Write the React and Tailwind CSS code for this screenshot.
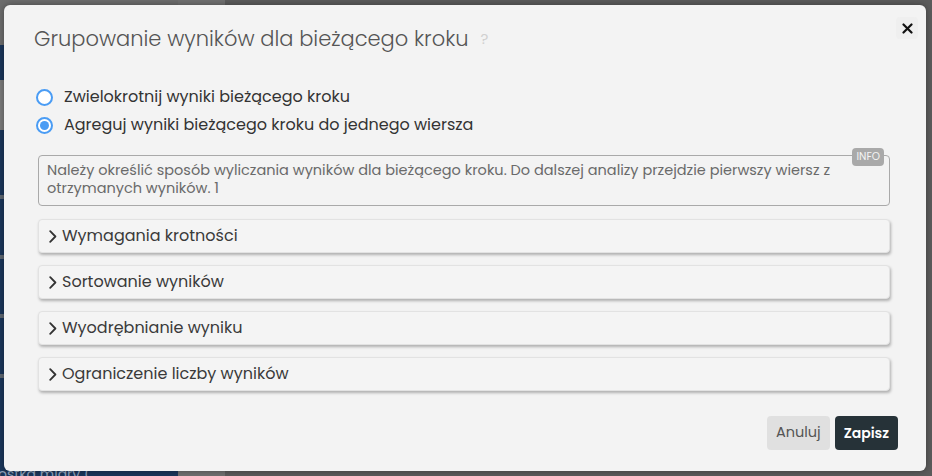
import { useState } from "react";

const FONT = "font-['Poppins','Inter','Open_Sans',sans-serif]";

function Radio({ checked, label, onClick }) {
  return (
    <label onClick={onClick} className="flex items-center h-[28px] cursor-pointer">
      <span className="w-[17px] h-[17px] rounded-full border-2 border-[#4a9cf4] flex items-center justify-center bg-white">
        {checked && <span className="w-[9px] h-[9px] rounded-full bg-[#4a9cf4]" />}
      </span>
      <span className="ml-[11px] text-[16px] text-[#333]">{label}</span>
    </label>
  );
}

function Section({ title }) {
  return (
    <div className="h-[34px] flex items-center pl-[10px] rounded-[4px] bg-[#f4f4f4] border border-[#e2e2e2] shadow-[1px_2px_3px_rgba(0,0,0,0.28)]">
      <svg width="8" height="13" viewBox="0 0 8 13" className="shrink-0">
        <path d="M1.2 1.2 6.4 6.5 1.2 11.8" fill="none" stroke="#333" strokeWidth="1.8" strokeLinecap="round" strokeLinejoin="round" />
      </svg>
      <span className="ml-[5px] text-[16px] text-[#3a3a3a]">{title}</span>
    </div>
  );
}

export default function App() {
  const [mode, setMode] = useState("agg");

  return (
    <div className={`relative w-[932px] h-[476px] overflow-hidden bg-[#5d5d5d] ${FONT}`}>
      {/* page behind the overlay */}
      <div className="flex h-full">
        <div className="w-[178px] h-full flex flex-col bg-[#1b365a]">
          <div className="h-[45px] bg-[#6c6c6c]" />
          <div className="h-[35px]" />
          <div className="h-[50px] bg-[#7a7a7a]" />
          <div className="h-[65px]" />
          <div className="h-[4px] bg-[#5e6670]" />
          <div className="h-[56px]" />
          <div className="h-[4px] bg-[#5e6670]" />
          <div className="h-[55px]" />
          <div className="h-[4px] bg-[#5e6670]" />
          <div className="h-[56px]" />
          <div className="h-[4px] bg-[#5e6670]" />
          <div className="flex-1 flex items-end">
            <span className="text-[14px] leading-[16px] text-[#8fa2bb] -ml-[2px] translate-y-[6px]">ostką miary (</span>
          </div>
        </div>
        <div className="w-[47px] h-full bg-[#707070]" />
        <div className="flex-1 h-full bg-[#5b5b5b]" />
      </div>

      {/* dialog */}
      <div className="absolute left-[4px] top-[5px] w-[922px] h-[466px] rounded-[6px] bg-[#f3f3f3] shadow-[0_0_6px_rgba(0,0,0,0.35)] px-[34px]">
        <button className="absolute right-[8px] top-[12px] w-[22px] h-[22px] flex items-center justify-center rounded-sm bg-[#efefef]">
          <svg width="11" height="11" viewBox="0 0 11 11">
            <path d="M1.5 1.5 9.5 9.5M9.5 1.5 1.5 9.5" stroke="#111" strokeWidth="2.2" strokeLinecap="round" />
          </svg>
        </button>

        <div className="flex items-center pt-[19px] -ml-[4px]">
          <h2 className="text-[21px] leading-[30px] font-light text-[#555]">
            Grupowanie wyników dla bieżącego kroku
          </h2>
          <span className="ml-[12px] text-[15px] text-[#d0d0d0]">?</span>
        </div>

        <div className="mt-[29px] -ml-[2px]">
          <Radio checked={mode === "mult"} onClick={() => setMode("mult")} label="Zwielokrotnij wyniki bieżącego kroku" />
          <Radio checked={mode === "agg"} onClick={() => setMode("agg")} label="Agreguj wyniki bieżącego kroku do jednego wiersza" />
        </div>

        <div className="relative mt-[16px] mr-[2px] border border-[#a9a9a9] rounded-[4px] pl-[8px] pt-[5px] pb-[8px] text-[14.5px] leading-[18px] text-[#6a6a6a]">
          <p>Należy określić sposób wyliczania wyników dla bieżącego kroku. Do dalszej analizy przejdzie pierwszy wiersz z</p>
          <p>otrzymanych wyników. 1</p>
          <span className="absolute right-[5px] -top-[8px] h-[18px] px-[4px] rounded-[4px] bg-[#a9a9a9] text-[10.5px] leading-[18px] text-[#f4f4f4]">
            INFO
          </span>
        </div>

        <div className="mt-[13px] mr-[2px] flex flex-col gap-[12px]">
          <Section title="Wymagania krotności" />
          <Section title="Sortowanie wyników" />
          <Section title="Wyodrębnianie wyniku" />
          <Section title="Ograniczenie liczby wyników" />
        </div>

        <div className="mt-[25px] -mr-[6px] flex justify-end gap-[5px]">
          <button className="h-[34px] px-[9px] rounded-[4px] bg-[#e0e0e0] text-[14.5px] text-[#555]">Anuluj</button>
          <button className="h-[34px] px-[9px] rounded-[4px] bg-[#263238] text-[14px] font-semibold text-white">Zapisz</button>
        </div>
      </div>
    </div>
  );
}
